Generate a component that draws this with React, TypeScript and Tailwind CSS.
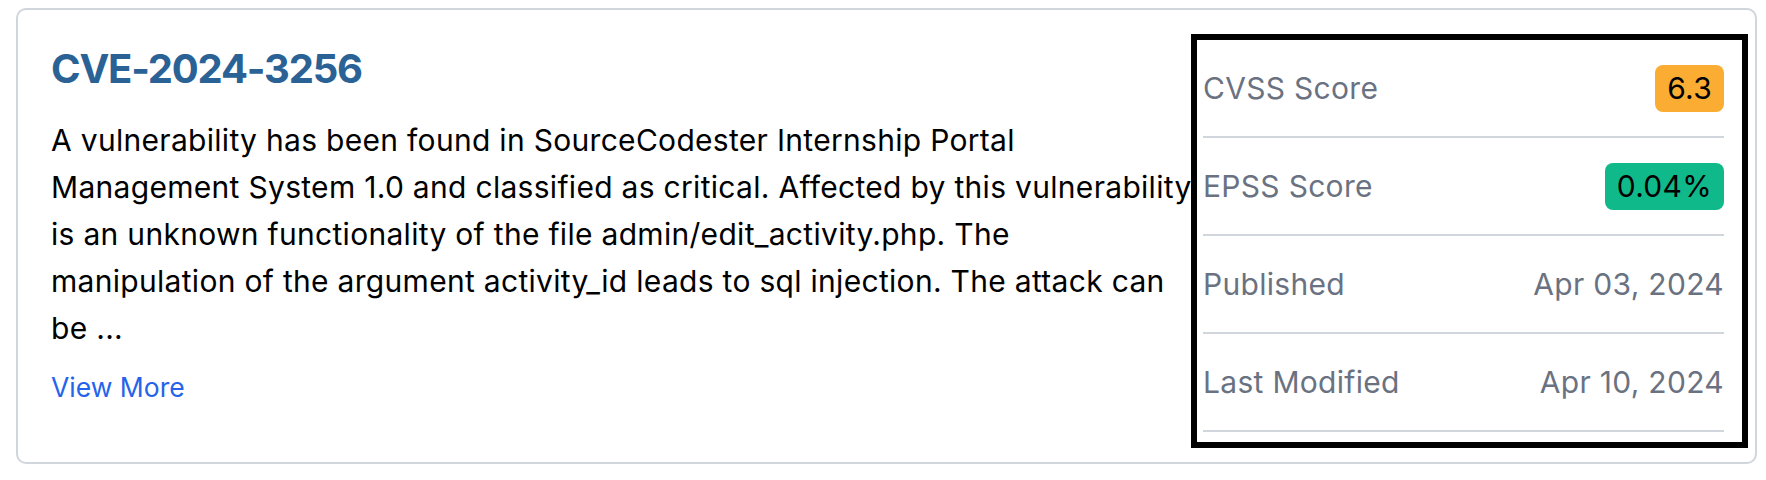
const Row = ({ label, children }: { label: string; children: React.ReactNode }) => (
  <div className="flex items-center justify-between border-b-2 border-gray-300 pt-[25px] pb-[24px]">
    <span className="text-gray-500">{label}</span>
    {children}
  </div>
);

export default function App() {
  return (
    <div
      className="min-h-screen bg-white pt-[8px] pl-[16px] pr-[9px]"
      style={{ fontFamily: 'Inter, "Liberation Sans", sans-serif' }}
    >
      <div className="flex h-[456px] rounded-[10px] border-2 border-gray-300 text-[30px] leading-[47px] tracking-[0.3px]">
        <div className="min-w-0 flex-1 pl-[33px] pt-[33px]">
          <h2 className="text-[40px] leading-[52px] font-bold tracking-[-1.2px] text-[#2b6296]">CVE-2024-3256</h2>
          <p className="mt-[22px] whitespace-nowrap text-black">
            A vulnerability has been found in SourceCodester Internship Portal
            <br />
            Management System 1.0 and classified as critical. Affected by this vulnerability
            <br />
            is an unknown functionality of the file admin/edit_activity.php. The
            <br />
            manipulation of the argument activity_id leads to sql injection. The attack can
            <br />
            be ...
          </p>
          <a href="#" className="mt-[12px] block text-[26.5px] tracking-normal text-[#2563eb]">
            View More
          </a>
        </div>

        <div className="mt-[24px] mb-[14px] mr-[7px] w-[557px] shrink-0 border-[6px] border-black pl-[6px] pr-[18px]">
          <Row label="CVSS Score">
            <span className="rounded-lg bg-[#fbad33] px-[12px] py-[5px] leading-[37px] text-black">6.3</span>
          </Row>
          <Row label="EPSS Score">
            <span className="rounded-lg bg-[#10b98a] px-[12px] py-[5px] leading-[37px] text-black">0.04%</span>
          </Row>
          <Row label="Published">
            <span className="text-gray-500">Apr 03, 2024</span>
          </Row>
          <Row label="Last Modified">
            <span className="text-gray-500">Apr 10, 2024</span>
          </Row>
        </div>
      </div>
    </div>
  );
}
